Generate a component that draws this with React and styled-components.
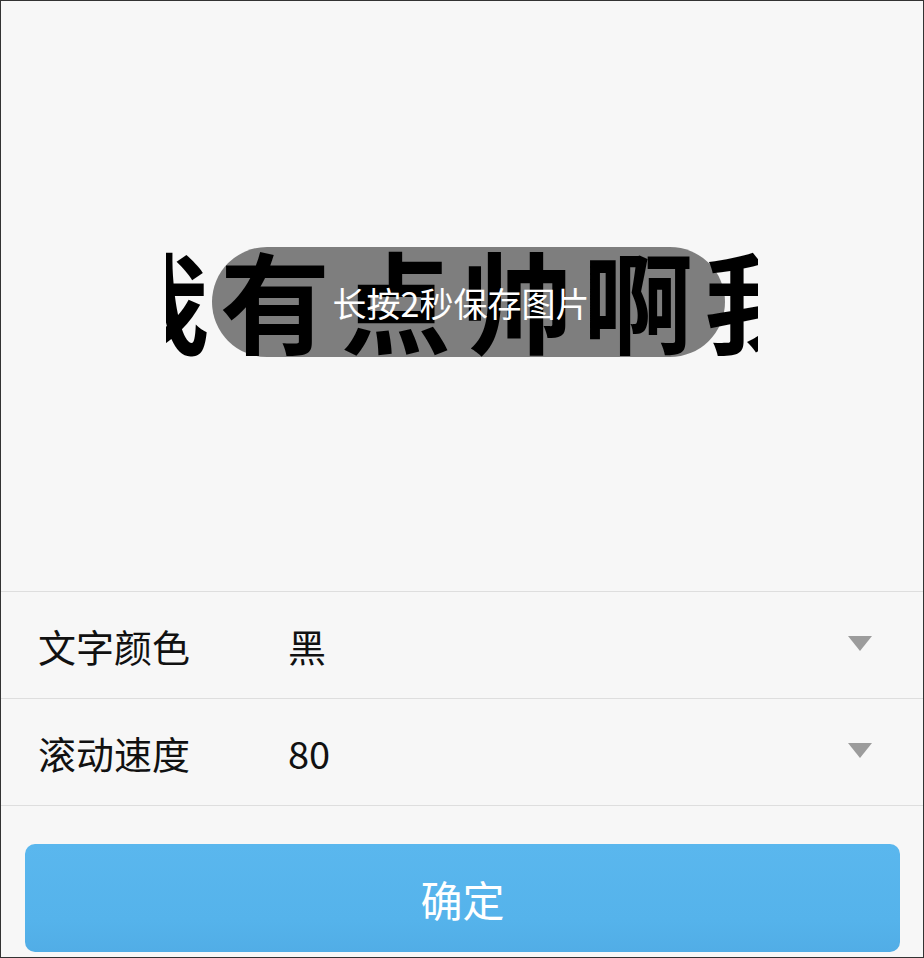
import styled, { createGlobalStyle } from 'styled-components';

const GlobalStyle = createGlobalStyle`
  * {
    margin: 0;
    padding: 0;
    box-sizing: border-box;
  }

  html, body {
    background: #f7f7f7;
    font-family: 'Noto Sans CJK SC', 'Noto Sans', sans-serif;
  }
`;

const Frame = styled.div`
  width: 924px;
  height: 958px;
  border: 1px solid #333333;
  background: #f7f7f7;
  display: flex;
  flex-direction: column;
`;

const Stage = styled.div`
  height: 590px;
  display: flex;
  justify-content: center;
  align-items: flex-start;
  padding-top: 247px;
`;

const Banner = styled.div`
  position: relative;
  width: 592px;
  height: 112px;
`;

const Clip = styled.div`
  width: 100%;
  height: 100%;
  overflow: hidden;
`;

const Marquee = styled.div`
  white-space: nowrap;
  font-size: 110px;
  font-weight: 700;
  letter-spacing: 11px;
  line-height: 100px;
  color: #000;
  transform: translateX(${props => props.offset}px);
`;

const Toast = styled.div`
  position: absolute;
  left: 46px;
  top: -1px;
  width: 513px;
  height: 110px;
  border-radius: 55px;
  background: rgba(0, 0, 0, 0.49);
  display: flex;
  align-items: center;
  justify-content: center;
  padding-right: 15px;
  color: #fff;
  font-size: 34px;
  font-weight: 400;
`;

const Settings = styled.div`
  border-top: 1px solid #dedede;
`;

const Row = styled.div`
  height: 107px;
  border-bottom: 1px solid #dedede;
  display: flex;
  align-items: center;
  padding: 0 51px 0 37px;
`;

const Label = styled.span`
  width: 250px;
  font-size: 38px;
  color: #111;
`;

const Value = styled.span`
  flex: 1;
  font-size: 38px;
  color: #111;
`;

const Caret = styled.span`
  width: 0;
  height: 0;
  border-left: 12px solid transparent;
  border-right: 12px solid transparent;
  border-top: 15px solid #9c9c9c;
  margin-top: -4px;
`;

const Footer = styled.div`
  padding: 38px 23px 5px 24px;
`;

const Button = styled.button`
  width: 100%;
  height: 108px;
  border: none;
  outline: none;
  border-radius: 10px;
  background: linear-gradient(#5ab7ee, #55b3eb 70%, #51ade6);
  color: #fff;
  font-family: 'Noto Sans CJK SC', 'Noto Sans', sans-serif;
  font-size: 42px;
  cursor: pointer;
`;

const rows = [
  { label: '文字颜色', value: '黑' },
  { label: '滚动速度', value: '80' },
];

function App() {
  return (
    <>
      <GlobalStyle />
      <Frame>
        <Stage>
          <Banner>
            <Clip>
              <Marquee offset={-67}>我有点帅啊我有</Marquee>
            </Clip>
            <Toast>长按2秒保存图片</Toast>
          </Banner>
        </Stage>

        <Settings>
          {rows.map(row => (
            <Row key={row.label}>
              <Label>{row.label}</Label>
              <Value>{row.value}</Value>
              <Caret />
            </Row>
          ))}
        </Settings>

        <Footer>
          <Button>确定</Button>
        </Footer>
      </Frame>
    </>
  );
}

export default App;
